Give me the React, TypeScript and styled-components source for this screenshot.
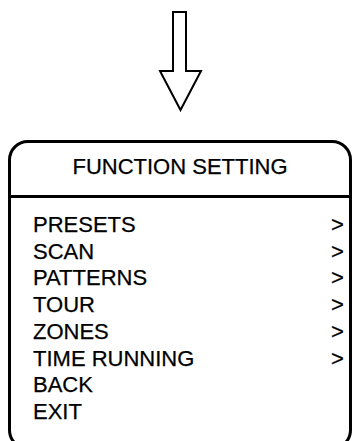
import styled, { createGlobalStyle } from 'styled-components';

const GlobalStyle = createGlobalStyle`
  html, body {
    margin: 0;
    padding: 0;
    background: #ffffff;
    overflow: hidden;
  }
  body {
    font-family: "Liberation Sans", Arial, sans-serif;
    color: #000000;
  }
`;

const Page = styled.div`
  width: 353px;
  height: 441px;
  overflow: hidden;
  display: flex;
  flex-direction: column;
`;

const ArrowArea = styled.div`
  height: 140px;
  flex-shrink: 0;
`;

const MenuBox = styled.div`
  margin-left: 8px;
  width: 344px;
  height: 310px;
  box-sizing: border-box;
  border: 3px solid #000;
  border-radius: 20px;
  flex-shrink: 0;
  display: flex;
  flex-direction: column;
`;

const Header = styled.div`
  height: 55px;
  box-sizing: border-box;
  padding-top: 11px;
  border-bottom: 3px solid #000;
  text-align: center;
  font-size: 22px;
  line-height: 26.7px;
  -webkit-text-stroke: 0.25px #000;
`;

const List = styled.ul`
  list-style: none;
  margin: 0;
  padding: 14px 5px 0 22px;
`;

const Row = styled.li`
  display: flex;
  justify-content: space-between;
  font-size: 22px;
  line-height: 26.7px;
  -webkit-text-stroke: 0.25px #000;
`;

const Chevron = styled.span`
  width: 13px;
`;

const items: { label: string; sub: boolean }[] = [
  { label: 'PRESETS', sub: true },
  { label: 'SCAN', sub: true },
  { label: 'PATTERNS', sub: true },
  { label: 'TOUR', sub: true },
  { label: 'ZONES', sub: true },
  { label: 'TIME RUNNING', sub: true },
  { label: 'BACK', sub: false },
  { label: 'EXIT', sub: false },
];

function DownArrow() {
  return (
    <svg width="353" height="140" viewBox="0 0 353 140">
      <polygon
        points="173,12 186,12 186,71 201,71 180.5,110 160,71 173,71"
        fill="none"
        stroke="#000"
        strokeWidth="2"
        strokeLinejoin="miter"
      />
    </svg>
  );
}

export default function App() {
  return (
    <Page>
      <GlobalStyle />
      <ArrowArea>
        <DownArrow />
      </ArrowArea>
      <MenuBox>
        <Header>FUNCTION SETTING</Header>
        <List>
          {items.map((item) => (
            <Row key={item.label}>
              <span>{item.label}</span>
              <Chevron>{item.sub ? '>' : ''}</Chevron>
            </Row>
          ))}
        </List>
      </MenuBox>
    </Page>
  );
}
